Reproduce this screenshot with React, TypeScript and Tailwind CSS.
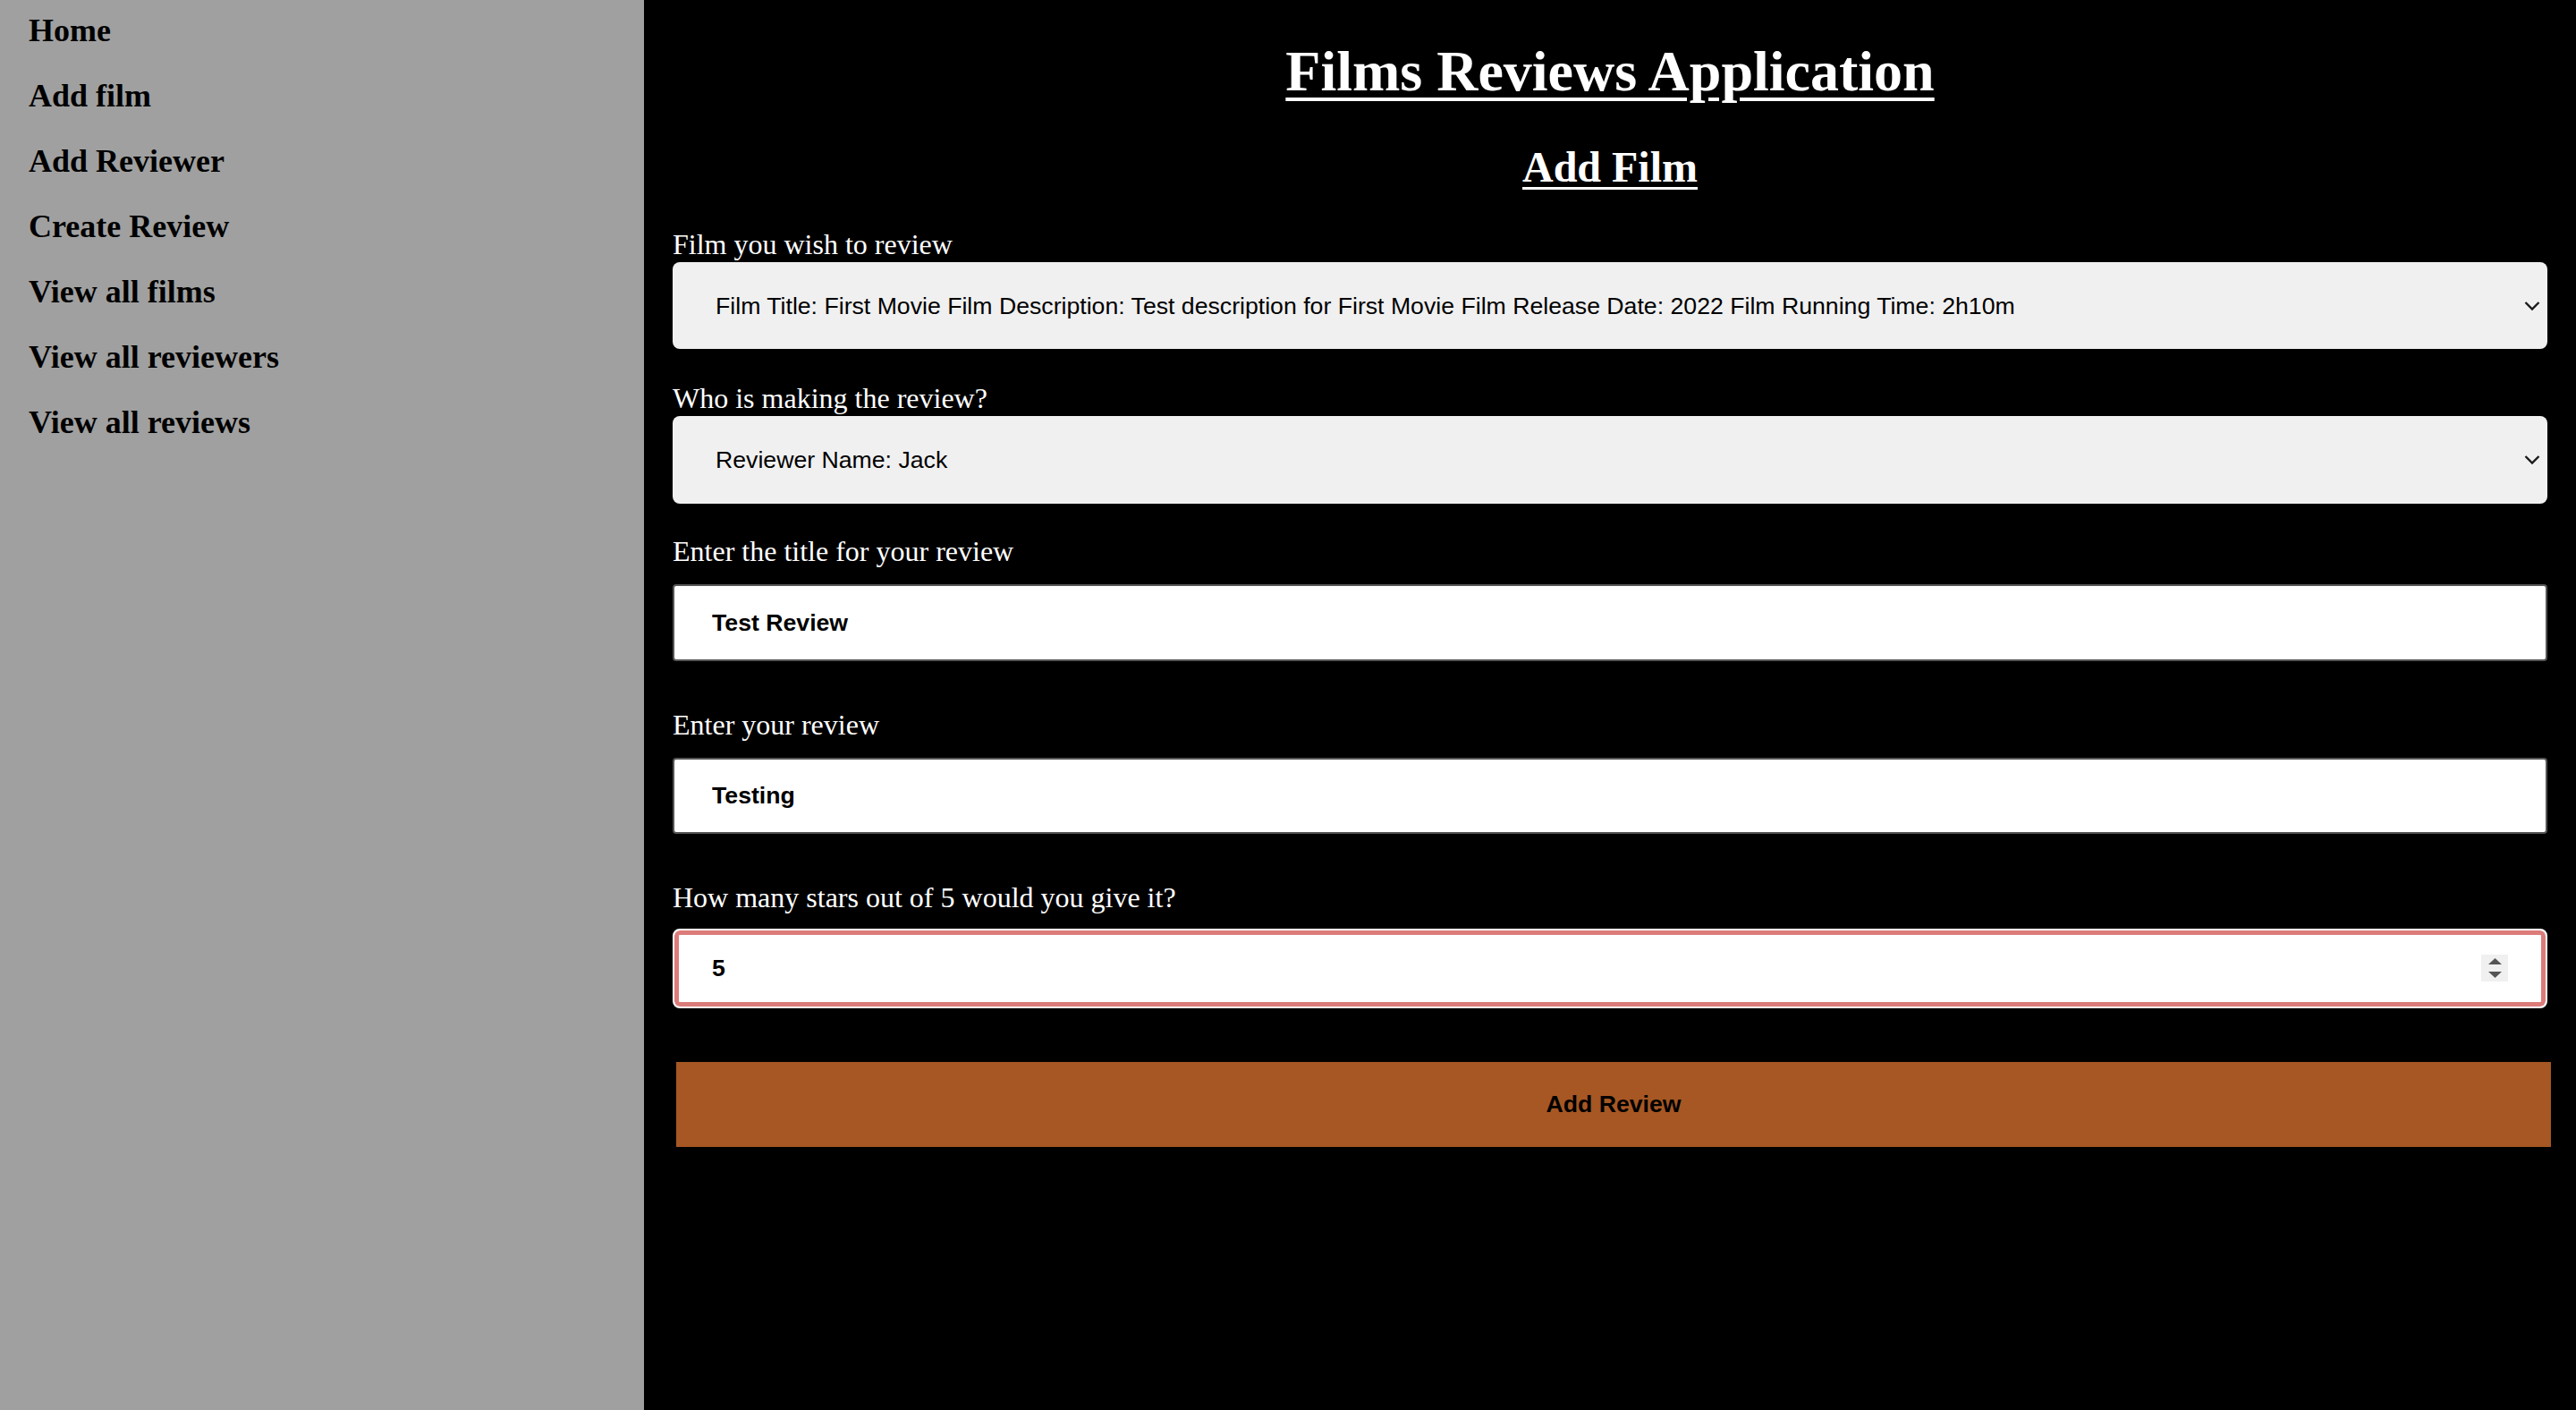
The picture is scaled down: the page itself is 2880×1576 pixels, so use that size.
import React from 'react'

const navItems = [
  'Home',
  'Add film',
  'Add Reviewer',
  'Create Review',
  'View all films',
  'View all reviewers',
  'View all reviews',
]

const serif = "font-['Liberation_Serif','Times_New_Roman',serif]"
const sans = "font-['Liberation_Sans',Arial,sans-serif]"

function Chevron() {
  return (
    <svg
      className="pointer-events-none absolute right-[8px] top-1/2 -translate-y-1/2"
      width="18"
      height="11"
      viewBox="0 0 18 11"
      fill="none"
    >
      <polyline points="1.5,1.5 9,9 16.5,1.5" stroke="#1a1a1a" strokeWidth="2.4" />
    </svg>
  )
}

function Spinner() {
  return (
    <div className="pointer-events-none absolute right-[44px] top-1/2 flex h-[30px] w-[30px] -translate-y-1/2 flex-col items-center justify-center gap-[8px] bg-[#f0f0f0]">
      <svg width="15" height="7" viewBox="0 0 15 7">
        <polygon points="7.5,0 15,7 0,7" fill="#555555" />
      </svg>
      <svg width="15" height="7" viewBox="0 0 15 7">
        <polygon points="0,0 15,0 7.5,7" fill="#555555" />
      </svg>
    </div>
  )
}

export default function App() {
  return (
    <div className="flex min-h-screen w-full bg-black">
      {/* sidebar */}
      <nav className={`flex w-[720px] shrink-0 flex-col gap-[30px] bg-[#a0a0a0] pl-[32px] pt-[12.5px] ${serif}`}>
        {navItems.map((item) => (
          <h3 key={item} className="text-[36px] font-bold leading-[43px] text-black">
            {item}
          </h3>
        ))}
      </nav>

      {/* main form */}
      <main className={`flex flex-1 flex-col px-[32px] pt-[43px] text-white ${serif}`}>
        <h1 className="text-center text-[64px] font-bold leading-[74px] underline decoration-[4px] underline-offset-[8px]">
          Films Reviews Application
        </h1>
        <h2 className="mt-[42px] text-center text-[48px] font-bold leading-[56px] underline decoration-[3px] underline-offset-[6px]">
          Add Film
        </h2>

        <label className="mt-[40px] text-[32px] leading-[37px]">Film you wish to review</label>
        <div className="relative mt-[1px]">
          <select
            defaultValue="1"
            className={`block h-[97px] w-full appearance-none rounded-[8px] bg-[#f0f0f0] pl-[48px] text-[26.67px] text-black outline-none ${sans}`}
          >
            <option value="1">
              Film Title: First Movie Film Description: Test description for First Movie Film Release Date: 2022 Film Running Time: 2h10m
            </option>
          </select>
          <Chevron />
        </div>

        <label className="mt-[36.7px] text-[32px] leading-[37px]">Who is making the review?</label>
        <div className="relative mt-[1px]">
          <select
            defaultValue="1"
            className={`block h-[98px] w-full appearance-none rounded-[8px] bg-[#f0f0f0] pl-[48px] text-[26.67px] text-black outline-none ${sans}`}
          >
            <option value="1">Reviewer Name: Jack</option>
          </select>
          <Chevron />
        </div>

        <label className="mt-[35.7px] text-[32px] leading-[37px]">Enter the title for your review</label>
        <input
          type="text"
          defaultValue="Test Review"
          className={`mt-[18px] h-[86px] w-full rounded-[4px] border-2 border-[#555555] bg-white pl-[42px] text-[26.67px] font-bold text-black outline-none ${sans}`}
        />

        <label className="mt-[52.5px] text-[32px] leading-[37px]">Enter your review</label>
        <input
          type="text"
          defaultValue="Testing"
          className={`mt-[18px] h-[85px] w-full rounded-[4px] border-2 border-[#555555] bg-white pl-[42px] text-[26.67px] font-bold text-black outline-none ${sans}`}
        />

        <label className="mt-[53.2px] text-[32px] leading-[37px]">How many stars out of 5 would you give it?</label>
        <div className="relative mt-[15.5px]">
          <input
            type="text"
            inputMode="numeric"
            defaultValue="5"
            className={`block h-[89px] w-full rounded-[8px] border-2 border-white bg-white pl-[42px] text-[26.67px] font-bold text-black shadow-[inset_0_0_0_5px_#dc7c7a] outline-none ${sans}`}
          />
          <Spinner />
        </div>

        <button
          type="button"
          className={`-mr-[4px] ml-[4px] mt-[60.3px] h-[95px] bg-[#a75723] text-[26.67px] font-bold text-black ${sans}`}
        >
          Add Review
        </button>
      </main>
    </div>
  )
}
